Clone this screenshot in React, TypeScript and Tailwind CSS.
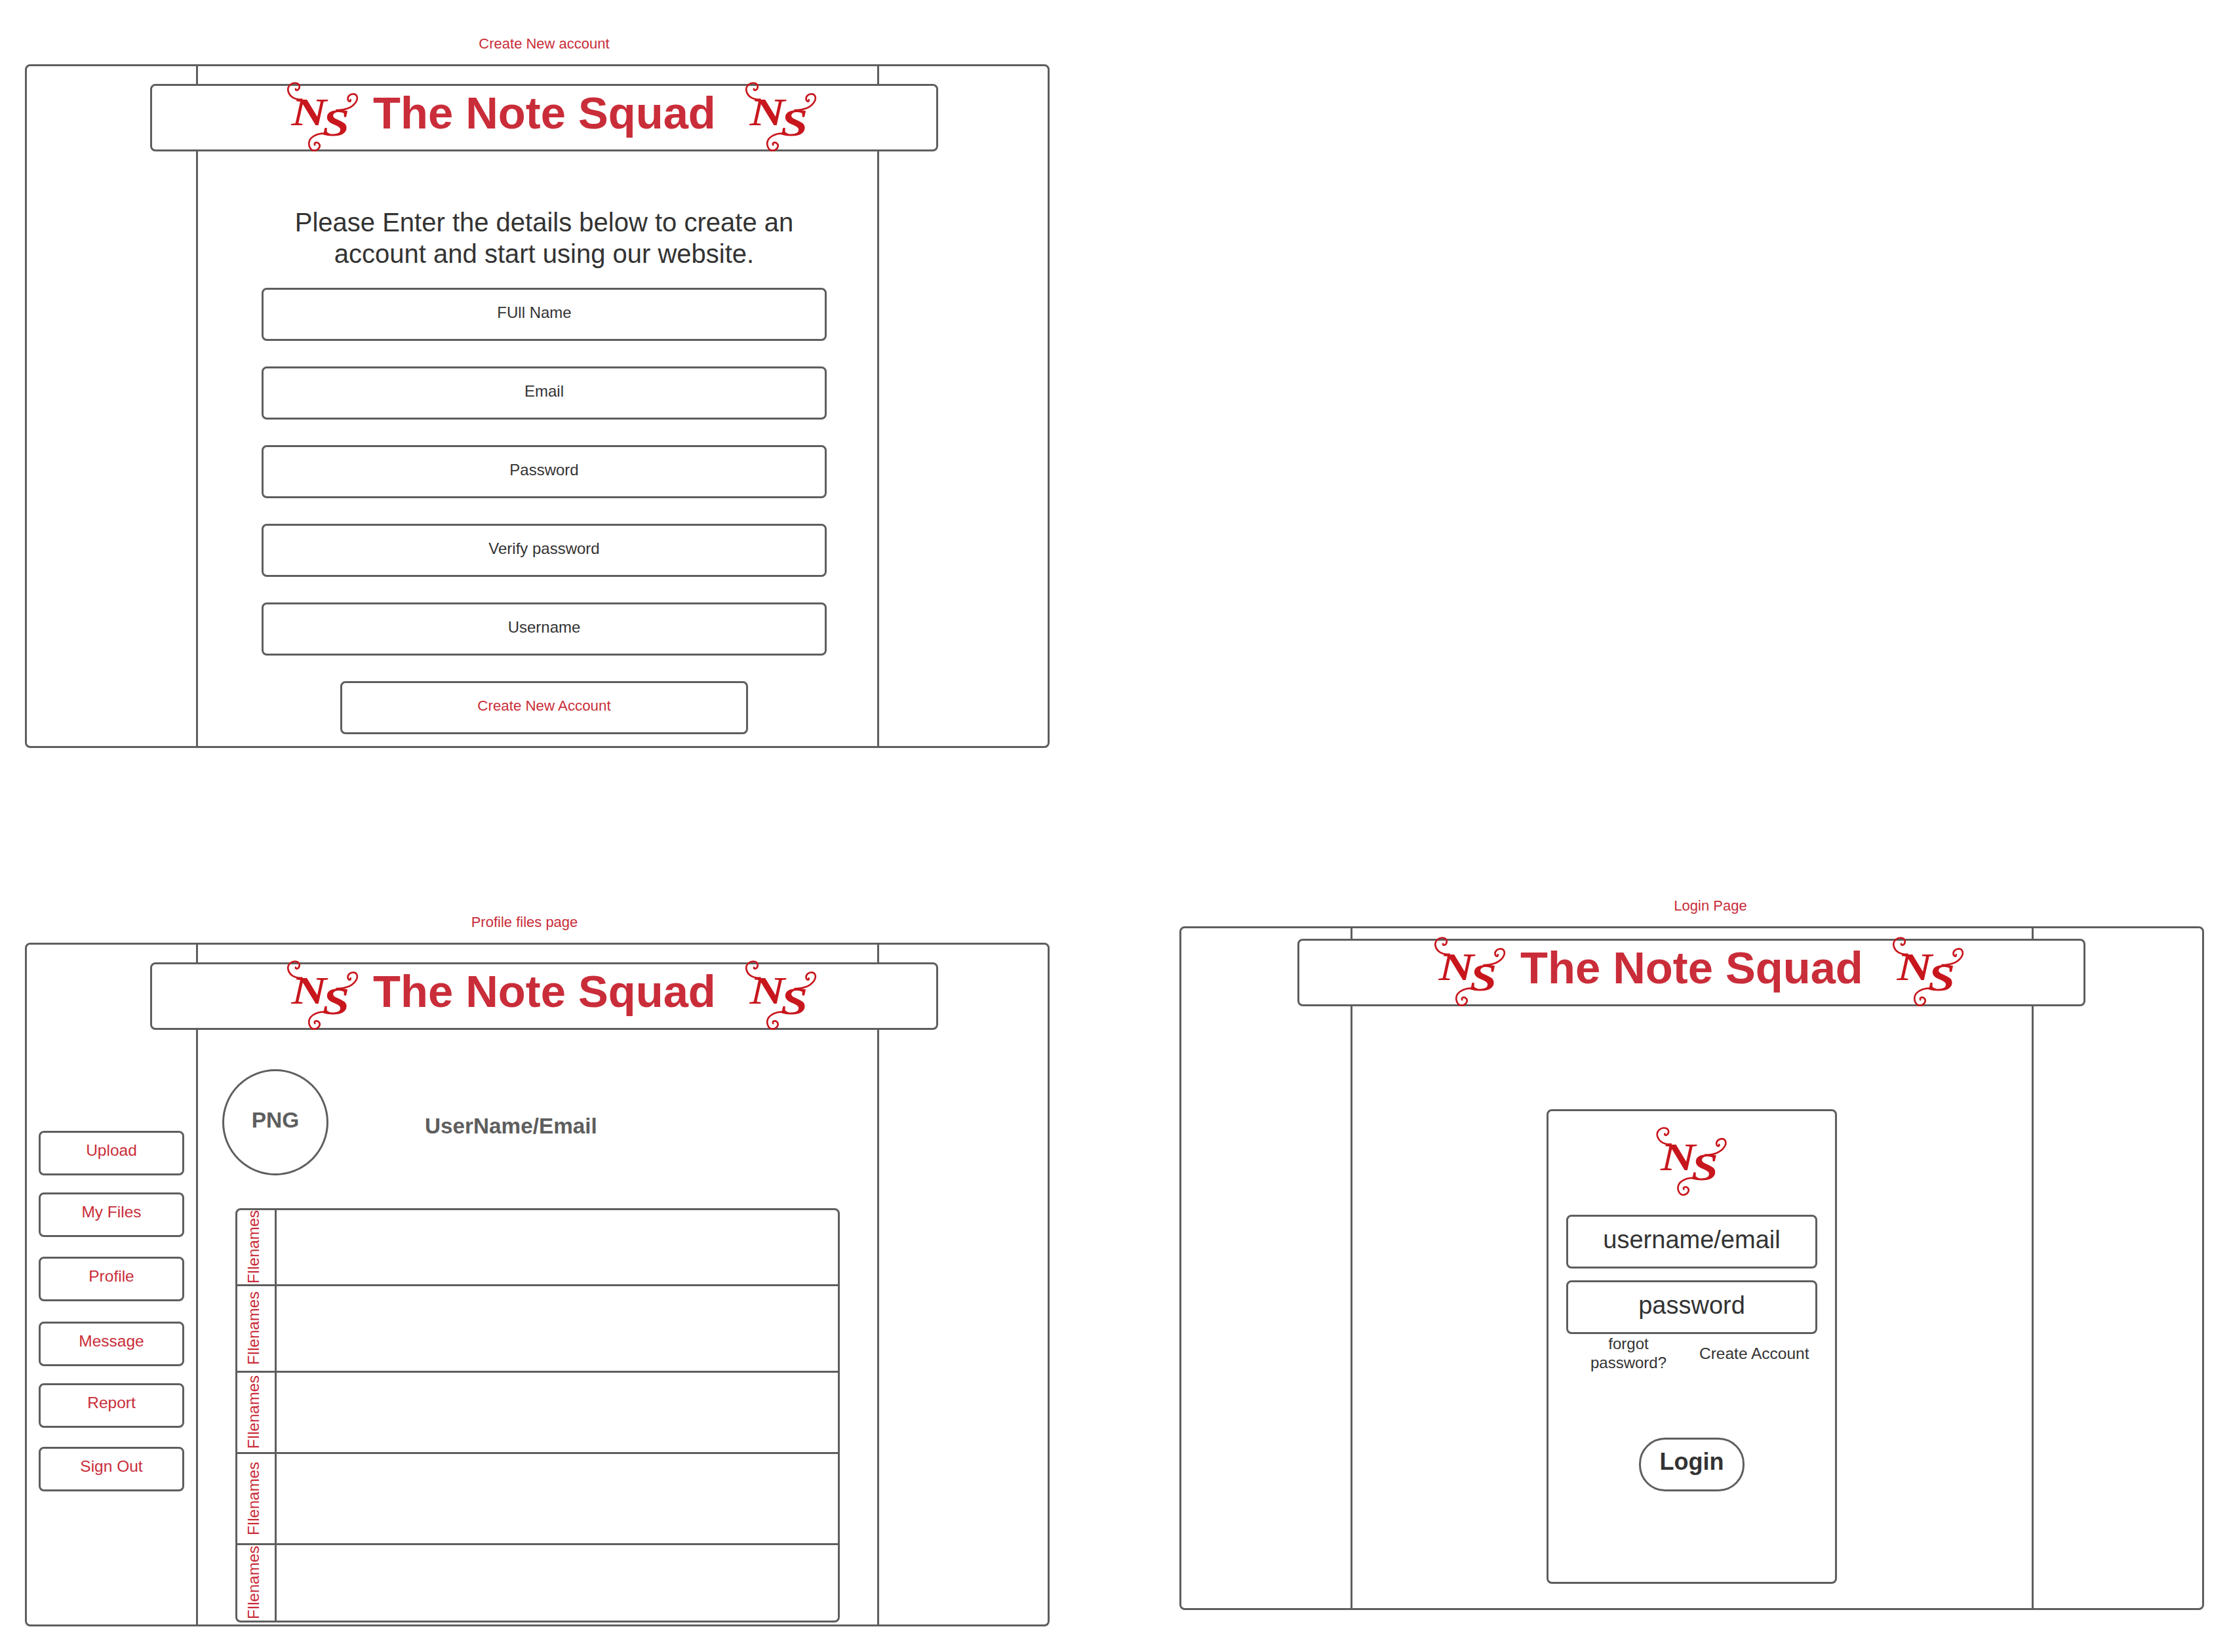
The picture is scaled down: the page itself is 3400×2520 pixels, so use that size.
const font = "font-['Liberation_Sans',Arial,sans-serif]";

function Logo({ className }: { className: string }) {
  return (
    <svg viewBox="105 70 340 335" className={className}>
      <g fill="none" stroke="#c8161d" strokeLinecap="round">
        <path d="M178 156 C150 160 122 146 115 118 C110 92 135 76 155 82 C172 88 170 108 157 114 C152 116 148 112 150 108" strokeWidth="8" />
        <path d="M338 206 C372 208 408 196 426 170 C442 146 428 128 410 132 C392 136 384 152 394 164 C400 168 404 164 402 158" strokeWidth="8" />
        <path d="M302 318 C272 306 236 318 218 338 C202 362 216 394 238 392 C260 388 268 366 252 356 C242 352 234 358 238 366" strokeWidth="8" />
      </g>
      <text transform="translate(130 276) scale(1.25 1)" dx="0 -16" dy="0 48" fontFamily="'Liberation Serif',serif" fontStyle="italic" fontWeight="700" fontSize="180" fill="#c8161d">NS</text>
    </svg>
  );
}

function Banner({ className }: { className: string }) {
  return (
    <div className={`absolute w-[1202px] h-[103px] bg-white border-[3px] border-[#5e5e5e] rounded-[8px] ${className}`}>
      <Logo className="absolute left-[204px] top-[-8px] w-[113px] h-[111px]" />
      <span className="absolute left-[337px] top-[1px] text-[68.7px] leading-[82px] font-bold whitespace-nowrap text-[#c92d39]">The Note Squad</span>
      <Logo className="absolute left-[903px] top-[-8px] w-[113px] h-[111px]" />
    </div>
  );
}

function Frame({ left, top, children, banner, sidebar }: { left: string; top: string; children: React.ReactNode; banner: string; sidebar?: React.ReactNode }) {
  return (
    <div className={`absolute ${left} ${top} w-[1563px] h-[1043px] flex border-[3px] border-[#5e5e5e] rounded-[8px]`}>
      <div className="w-[258px] shrink-0">{sidebar}</div>
      <div className="w-[1042px] shrink-0 border-x-[3px] border-[#5e5e5e]">{children}</div>
      <Banner className={banner} />
    </div>
  );
}

function Field({ label, className = "" }: { label: string; className?: string }) {
  return (
    <div className={`w-[862px] h-[81px] border-[3px] border-[#5e5e5e] rounded-[8px] flex items-center justify-center pb-[5px] text-[24px] text-[#333333] ${className}`}>
      {label}
    </div>
  );
}

const sideItems: [string, string][] = [
  ["Upload", "mt-[284px]"],
  ["My Files", "mt-[26px]"],
  ["Profile", "mt-[30px]"],
  ["Message", "mt-[31px]"],
  ["Report", "mt-[26px]"],
  ["Sign Out", "mt-[29px]"],
];

function Sidebar() {
  return (
    <div className="flex flex-col pl-[18px]">
      {sideItems.map(([label, mt]) => (
        <div key={label} className={`w-[222px] h-[68px] border-[3px] border-[#5e5e5e] rounded-[8px] flex items-center justify-center pb-[7px] text-[24.5px] text-[#c92d39] ${mt}`}>
          {label}
        </div>
      ))}
    </div>
  );
}

const rows = ["h-[113px]", "h-[132px]", "h-[124px]", "h-[139px]", "h-[118px]"];

export default function App() {
  return (
    <div className={`relative w-[3400px] h-[2520px] bg-white overflow-hidden ${font}`}>
      <p className="absolute left-[630px] top-[54px] w-[400px] text-center text-[22px] leading-[26px] text-[#c92d39]">Create New account</p>
      <Frame left="left-[38px]" top="top-[98px]" banner="left-[188px] top-[27px]">
        <div className="flex flex-col items-center pl-[20px]">
          <p className="mt-[214px] w-[900px] text-center text-[40px] leading-[48px] text-[#333333]">
            Please Enter the details below to create an<br />account and start using our website.
          </p>
          <div className="mt-[28px] flex flex-col items-center gap-[39px]">
            <Field label="FUll Name" className="pr-[30px]" />
            <Field label="Email" />
            <Field label="Password" />
            <Field label="Verify password" />
            <Field label="Username" />
            <div className="w-[622px] h-[81px] border-[3px] border-[#5e5e5e] rounded-[8px] flex items-center justify-center pb-[5px] text-[22.3px] text-[#c92d39]">Create New Account</div>
          </div>
        </div>
      </Frame>

      <p className="absolute left-[600px] top-[1394px] w-[400px] text-center text-[22px] leading-[26px] text-[#c92d39]">Profile files page</p>
      <Frame left="left-[38px]" top="top-[1438px]" banner="left-[188px] top-[27px]" sidebar={<Sidebar />}>
        <div className="pt-[190px] pl-[37px]">
          <div className="flex items-start">
            <div className="w-[162px] h-[162px] rounded-full border-[3px] border-[#5e5e5e] flex items-center justify-center pb-[6px] text-[33.5px] font-bold text-[#5e5e5e]">PNG</div>
            <div className="ml-[147px] mt-[66px] text-[33.3px] leading-[42px] font-bold text-[#5e5e5e]">UserName/Email</div>
          </div>
          <div className="ml-[20px] mt-[50px] w-[922px] border-[3px] border-[#5e5e5e] rounded-[8px]">
            {rows.map((h, i) => (
              <div key={i} className={`flex ${h} ${i > 0 ? "border-t-[3px] border-[#5e5e5e]" : ""}`}>
                <div className="w-[60px] shrink-0 border-r-[3px] border-[#5e5e5e] flex items-center justify-center pr-[8px]">
                  <span className="[writing-mode:vertical-rl] rotate-180 text-[24px] leading-[28px] whitespace-nowrap text-[#c92d39]">FIlenames</span>
                </div>
              </div>
            ))}
          </div>
        </div>
      </Frame>

      <p className="absolute left-[2409px] top-[1369px] w-[400px] text-center text-[22px] leading-[26px] text-[#c92d39]">Login Page</p>
      <Frame left="left-[1799px]" top="top-[1413px]" banner="left-[177px] top-[16px]">
        <div className="pt-[276px] pr-[1px] flex justify-center">
          <div className="w-[443px] h-[724px] border-[3px] border-[#5e5e5e] rounded-[8px] flex flex-col items-center">
            <Logo className="mt-[22px] w-[113px] h-[110px]" />
            <div className="mt-[26px] w-[383px] h-[82px] border-[3px] border-[#5e5e5e] rounded-[8px] flex items-center justify-center pb-[6px] text-[38px] text-[#333333]">username/email</div>
            <div className="mt-[18px] w-[383px] h-[82px] border-[3px] border-[#5e5e5e] rounded-[8px] flex items-center justify-center pb-[6px] text-[38px] text-[#333333]">password</div>
            <div className="w-full flex items-center text-[24.5px] leading-[29px] text-[#333333]">
              <span className="w-[230px] pl-[14px] text-center text-[24px]">forgot<br />password?</span>
              <span className="whitespace-nowrap">Create Account</span>
            </div>
            <div className="mt-[100px] w-[161px] h-[82px] rounded-[40px] border-[3px] border-[#5e5e5e] flex items-center justify-center pb-[8px] text-[36px] font-bold text-[#333333]">Login</div>
          </div>
        </div>
      </Frame>
    </div>
  );
}
